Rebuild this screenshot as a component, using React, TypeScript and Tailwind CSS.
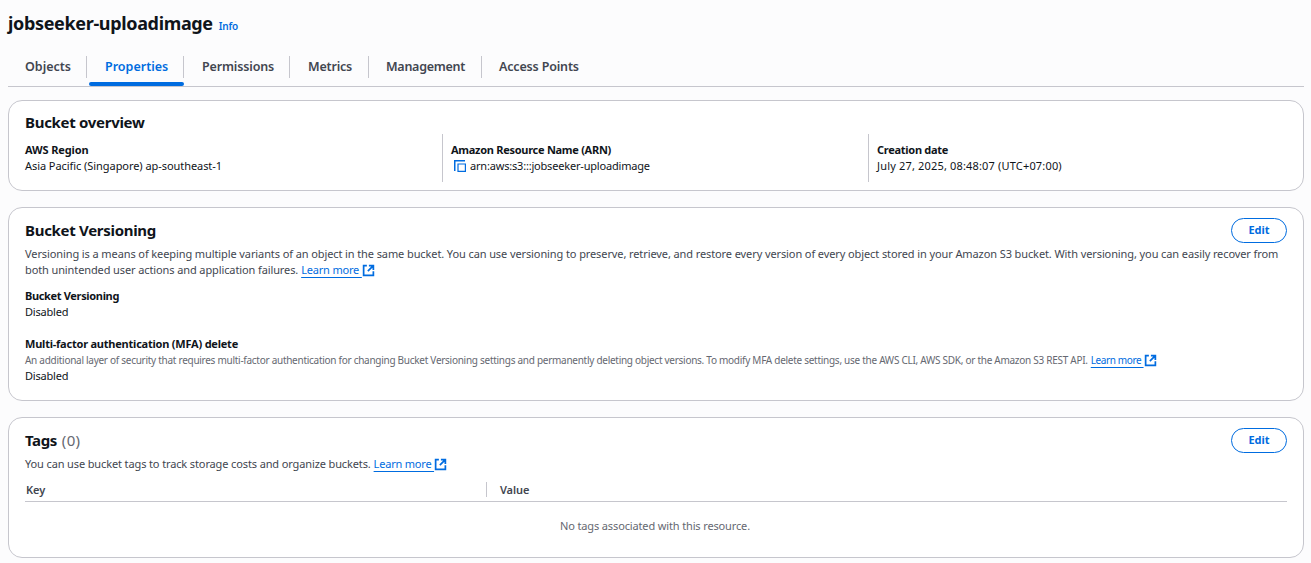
import type { ReactNode } from "react";

function ExternalIcon() {
  return (
    <svg className="h-[13px] w-[13px] shrink-0" viewBox="0 0 16 16" fill="none" stroke="currentColor" strokeWidth="2.1">
      <path d="M14 9v5H2V2h4" />
      <path d="M8.5 2H14v5.5" />
      <path d="M14 2 7.2 8.8" />
      <path d="M10.5 2.5h3v3z" fill="currentColor" stroke="none" />
    </svg>
  );
}

function CopyIcon() {
  return (
    <svg className="mr-1 ml-[3px] h-3 w-3 shrink-0 text-[#006ce0]" viewBox="0 0 12 12" fill="none" stroke="currentColor">
      <path d="M.75 11V.75H11" strokeWidth="1.5" />
      <path d="M4 4h7.4v7.4H4z" strokeWidth="1.2" />
    </svg>
  );
}

function LearnMore({ className }: { className: string }) {
  return (
    <a className={`inline-flex items-center whitespace-pre text-[#006ce0] ${className}`}>
      <span className="underline decoration-1 underline-offset-[3px]">{"Learn more "}</span>
      <ExternalIcon />
    </a>
  );
}

function Card({ className, children }: { className: string; children: ReactNode }) {
  return <section className={`rounded-[14px] border border-[#c6c6cd] bg-white px-4 ${className}`}>{children}</section>;
}

function EditButton() {
  return (
    <button className="h-[25px] w-14 rounded-full border border-[#006ce0] bg-white pb-px text-[11px] leading-[22px] font-bold text-[#006ce0]">
      Edit
    </button>
  );
}

function Field({ label, labelClass, children }: { label: string; labelClass: string; children: ReactNode }) {
  return (
    <div>
      <div className={`font-bold ${labelClass}`}>{label}</div>
      {children}
    </div>
  );
}

const tabs = [
  { label: "Objects", box: "w-[79px] pl-[17px]", text: "" },
  { label: "Properties", box: "w-[97px] pl-[18px]", text: "", active: true },
  { label: "Permissions", box: "w-[106px] pl-[18px]", text: "tracking-[-0.15px]" },
  { label: "Metrics", box: "w-[79px] pl-[18px]", text: "tracking-[-0.2px]" },
  { label: "Management", box: "w-[113px] pl-[17px]", text: "tracking-[-0.27px]" },
  { label: "Access Points", box: "w-[110px] pl-[17px]", text: "tracking-[-0.17px]", last: true },
];

export default function App() {
  return (
    <main className="flex h-[563px] w-[1311px] flex-col overflow-hidden bg-[#fcfcfd] pr-[7px] pl-2 font-['Noto_Sans',sans-serif] text-[11px] leading-4 text-[#0f141a]">
      <header className="flex h-12 items-baseline gap-[6px] pt-[11px]">
        <h1 className="text-[18px] leading-6 font-bold tracking-[-0.34px]">jobseeker-uploadimage</h1>
        <a className="text-[10px] font-semibold tracking-[-0.2px] text-[#006ce0]">Info</a>
      </header>

      <nav className="flex h-[39px] border-b border-[#c6c6cd]">
        {tabs.map((t) => (
          <div key={t.label} className={`relative h-full pt-2 ${t.box}`}>
            <div className={`flex h-[22px] items-center text-[12.5px] font-semibold ${t.last ? "" : "border-r border-[#c6c6cd]"} ${t.active ? "text-[#006ce0]" : "text-[#424650]"}`}>
              <span className={`whitespace-nowrap ${t.text}`}>{t.label}</span>
            </div>
            {t.active && <div className="absolute right-0 bottom-0 left-0.5 h-1 rounded-full bg-[#006ce0]" />}
          </div>
        ))}
      </nav>

      <Card className="mt-[13px] h-[91px]">
        <h2 className="mt-[11px] h-[22px] text-[15px] leading-5 font-bold tracking-[-0.3px]">Bucket overview</h2>
        <div className="grid h-12 grid-cols-[417px_426px_1fr]">
          <div className="pt-2">
            <Field label="AWS Region" labelClass="tracking-[-0.12px]">
              <div className="tracking-[-0.06px]">Asia Pacific (Singapore) ap-southeast-1</div>
            </Field>
          </div>
          <div className="border-l border-[#c6c6cd] pt-2 pl-2">
            <Field label="Amazon Resource Name (ARN)" labelClass="tracking-[-0.28px]">
              <div className="flex items-center tracking-[-0.19px]">
                <CopyIcon />
                arn:aws:s3:::jobseeker-uploadimage
              </div>
            </Field>
          </div>
          <div className="border-l border-[#c6c6cd] pt-2 pl-2">
            <Field label="Creation date" labelClass="tracking-[-0.28px]">
              <div className="tracking-[0.17px]">July 27, 2025, 08:48:07 (UTC+07:00)</div>
            </Field>
          </div>
        </div>
      </Card>

      <Card className="mt-4 h-[194px]">
        <div className="flex h-[38px] items-start justify-between pt-[10px]">
          <h2 className="mt-0.5 text-[15px] leading-5 font-bold tracking-[-0.3px]">Bucket Versioning</h2>
          <EditButton />
        </div>
        <div className="whitespace-nowrap text-[#424650]">
          <p className="tracking-[-0.1px]">
            Versioning is a means of keeping multiple variants of an object in the same bucket. You can use versioning to preserve, retrieve, and restore every version of every object stored in your Amazon S3 bucket. With versioning, you can easily recover from
          </p>
          <p className="flex tracking-[-0.11px]">
            <span className="mr-[3px]">both unintended user actions and application failures.</span>
            <LearnMore className="tracking-[-0.18px]" />
          </p>
        </div>
        <div className="mt-[10px] flex flex-col gap-4">
          <Field label="Bucket Versioning" labelClass="tracking-[-0.34px]">
            <div className="tracking-[-0.2px]">Disabled</div>
          </Field>
          <Field label="Multi-factor authentication (MFA) delete" labelClass="tracking-[-0.22px]">
            <p className="flex text-[10px] whitespace-nowrap text-[#656871]">
              <span className="mr-[3px] tracking-[-0.275px]">
                An additional layer of security that requires multi-factor authentication for changing Bucket Versioning settings and permanently deleting object versions. To modify MFA delete settings, use the AWS CLI, AWS SDK, or the Amazon S3 REST API.
              </span>
              <LearnMore className="tracking-[-0.38px]" />
            </p>
            <div className="tracking-[-0.2px]">Disabled</div>
          </Field>
        </div>
      </Card>

      <Card className="mt-4 h-[141px]">
        <div className="flex h-[38px] items-start justify-between pt-[10px]">
          <h2 className="mt-0.5 flex gap-[5px] text-[15px] leading-5 font-bold tracking-[-0.4px]">
            Tags <span className="font-normal tracking-[0.3px] text-[#656871]">(0)</span>
          </h2>
          <EditButton />
        </div>
        <p className="flex whitespace-nowrap text-[#424650]">
          <span className="mr-[3px] tracking-[-0.125px]">You can use bucket tags to track storage costs and organize buckets.</span>
          <LearnMore className="tracking-[-0.2px]" />
        </p>
        <div className="mt-[10px] flex h-5 border-b border-[#c6c6cd] font-semibold text-[#424650]">
          <div className="h-[15px] w-[462px] border-r border-[#c6c6cd] pl-px">Key</div>
          <div className="pl-[13px] tracking-[-0.1px]">Value</div>
        </div>
        <p className="mt-4 pr-[2px] text-center tracking-[-0.14px] text-[#656871]">No tags associated with this resource.</p>
      </Card>
    </main>
  );
}
